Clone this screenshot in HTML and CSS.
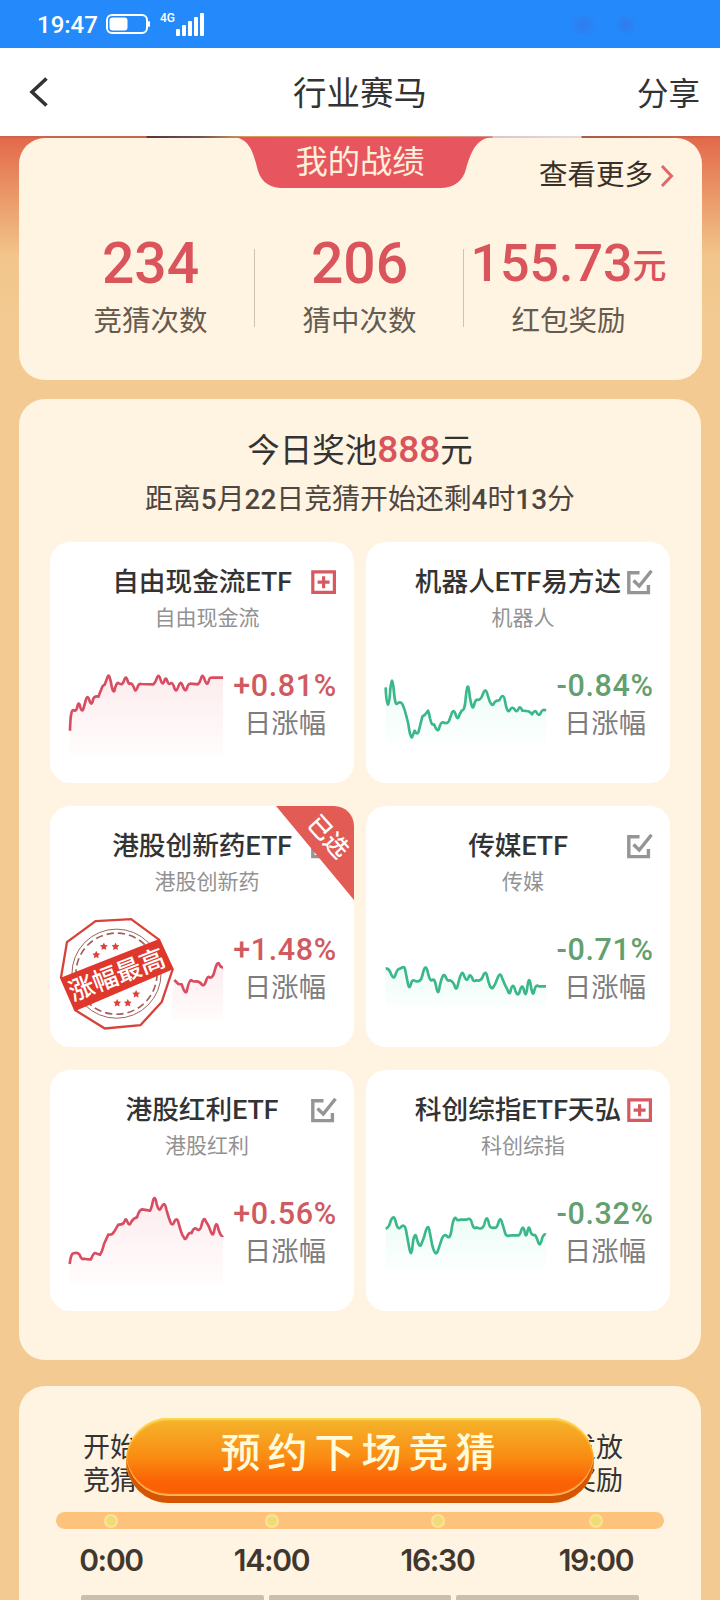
FILE: index.html
```html
<!DOCTYPE html>
<html lang="zh-CN">
<head>
    <meta charset="UTF-8">
    <meta name="viewport" content="width=device-width, initial-scale=1.0">
    <title>行业赛马</title>
    <link rel="stylesheet" href="styles.css">
</head>
<body>
    <svg class="defs" width="0" height="0">
        <defs>
            <linearGradient id="fillUp" x1="0" y1="0" x2="0" y2="1">
                <stop offset="0" stop-color="#fdecee"/>
                <stop offset="1" stop-color="#fffcfc"/>
            </linearGradient>
            <linearGradient id="fillDown" x1="0" y1="0" x2="0" y2="1">
                <stop offset="0" stop-color="#ecfcf6"/>
                <stop offset="1" stop-color="#fcfffe"/>
            </linearGradient>
            <symbol id="plus" viewBox="0 0 26 26">
                <path d="M1.8 1.8h21.6v20.6H1.8zM12.6 6.2v12M6.6 12.2h12" fill="none" stroke="#d65a60" stroke-width="3.2"/>
            </symbol>
            <symbol id="check" viewBox="0 0 26 26">
                <path d="M12.5 2.8H1.8v19.8h19.6v-7.5" fill="none" stroke="#959595" stroke-width="3.4"/>
                <path d="M6.5 10.500l5.800 5.600L24.500.8" fill="none" stroke="#959595" stroke-width="3.4"/>
            </symbol>
            <symbol id="star" viewBox="0 0 20 20">
                <path d="M10 0l3 6.5 7 .8-5.200 4.800 1.400 7L10 15.600l-6.200 3.500 1.400-7L0 7.300l7-.8z" fill="#dc4238"/>
            </symbol>
        </defs>
    </svg>

    <div class="status-bar">
        <span class="time">19:47</span>
        <svg class="battery" width="44" height="20" viewBox="0 0 44 20">
            <rect x="1" y="1" width="40" height="18" rx="5" fill="none" stroke="#fff" stroke-width="2"/>
            <rect x="3.500" y="3.500" width="18" height="13" rx="3" fill="#fff"/>
            <rect x="42" y="7" width="2" height="6" rx="1" fill="#fff"/>
        </svg>
        <span class="net">4G</span>
        <svg class="signal" width="28" height="24" viewBox="0 0 28 24" fill="#fff">
            <rect x="0" y="16" width="4" height="7" rx="1"/>
            <rect x="6" y="12" width="4" height="11" rx="1"/>
            <rect x="12" y="8" width="4" height="15" rx="1"/>
            <rect x="18" y="4" width="4" height="19" rx="1"/>
            <rect x="24" y="0" width="4" height="23" rx="1"/>
        </svg>
        <span class="smudge"></span>
    </div>

    <div class="nav-bar">
        <svg class="back" width="20" height="32" viewBox="0 0 20 32">
            <path d="M17.500 2.500L3 16l14.500 13.500" fill="none" stroke="#333" stroke-width="3.600"/>
        </svg>
        <h1>行业赛马</h1>
        <span class="share">分享</span>
    </div>

    <div class="page">
        <div class="banner-edge"></div>

        <div class="card record">
            <div class="record-tab">
                <svg width="260" height="51" viewBox="233 137 260 51">
                    <path d="M233 137C251 138 254 156 258 171C262 183 271 188 282 188H440C454 188 463 181 466 169C471 152 476 138 493 137Z" fill="#e7565f"/>
                </svg>
                <span>我的战绩</span>
            </div>
            <div class="more">查看更多
                <svg width="14" height="24" viewBox="0 0 14 24"><path d="M2 2l9.500 10L2 22" fill="none" stroke="#e2666c" stroke-width="3"/></svg>
            </div>
            <div class="stats">
                <div class="stat"><div class="num">234</div><div class="label">竞猜次数</div></div>
                <div class="stat"><div class="num">206</div><div class="label">猜中次数</div></div>
                <div class="stat"><div class="num money">155.73<small>元</small></div><div class="label">红包奖励</div></div>
            </div>
        </div>

        <div class="card pool">
            <h2>今日奖池<b>888</b>元</h2>
            <p class="countdown">距离<b>5</b>月<b>22</b>日竞猜开始还剩<b>4</b>时<b>13</b>分</p>

            <div class="etf-grid">
                <div class="etf up">
                    <svg class="pick"><use href="#plus"/></svg>
                    <h3>自由现金流ETF</h3>
                    <p class="sub">自由现金流</p>
                    <div class="quote">
                        <svg class="chart" viewBox="81 400 495 285">
                            <path class="area" d="M90 600L93 552L98 537L107 540L117 518L127 541L143 497L155 520L164 499L175 497L188 466L194 462L207 433L220 481L233 457L244 462L258 439L268 461L274 457L287 481L299 460L340 461L356 434L369 461L378 442L388 460L397 458L408 481L422 456L436 480L447 459L474 461L488 434L502 461L512 440L549 441V675H90Z"/>
                            <path class="line" d="M90 600Q91 560 94 548Q97 534 104 540Q110 542 113 524Q117 511 121 530Q127 550 132 528L138 506Q143 491 149 511Q155 528 159 507Q163 495 175 498L188 466L194 462L203 438Q207 427 212 451Q218 488 223 481Q229 455 235 457Q248 466 252 450Q258 431 263 451Q267 463 273 458Q279 461 283 474Q287 486 292 471Q296 457 304 460L340 461Q346 457 350 444Q356 426 362 448Q368 469 374 448Q378 437 383 454Q387 464 393 457Q399 457 403 472Q408 487 414 470Q421 448 427 463Q435 487 440 474Q445 457 453 459L474 461Q479 457 483 444Q488 426 494 447Q501 469 506 451Q509 439 516 441L549 441"/>
                        </svg>
                        <div class="change"><b>+0.81%</b><span>日涨幅</span></div>
                    </div>
                </div>

                <div class="etf down">
                    <svg class="pick"><use href="#check"/></svg>
                    <h3>机器人ETF易方达</h3>
                    <p class="sub">机器人</p>
                    <div class="quote">
                        <svg class="chart" viewBox="69 400 495 285">
                            <path class="area" d="M77 470L84 522L96 448L107 522L123 517L145 586L155 621L164 600L173 610L187 558L204 540L217 582L232 599L245 574L260 577L280 540L293 563L305 540L313 533L323 472L338 531L351 508L361 506L377 479L395 523L412 508L430 495L446 541L460 530L470 542L480 530L500 542L516 551L526 543L537 552L549 539L558 540V640H77Z"/>
                            <path class="line" d="M77 470Q79 522 84 522Q88 518 91 475Q96 424 101 475Q105 521 110 520Q120 510 127 520Q134 535 139 556L145 580Q151 623 156 620L164 600Q172 615 176 602L187 558L196 551L204 540Q207 546 210 563Q215 586 222 581Q232 607 237 594Q242 574 249 575Q262 581 267 571L274 551Q280 532 286 549Q293 573 298 553L305 540Q313 541 316 514Q323 431 329 496Q337 544 342 524Q347 503 353 508Q363 509 369 489Q377 468 383 493Q393 529 400 521Q406 508 418 509Q430 482 435 511Q442 551 449 539Q457 526 463 535Q471 549 476 533Q481 525 487 540L500 541Q509 541 516 551Q524 537 529 544Q537 561 543 545Q549 534 558 540"/>
                        </svg>
                        <div class="change"><b>-0.84%</b><span>日涨幅</span></div>
                    </div>
                </div>

                <div class="etf up">
                    <svg class="pick"><use href="#check"/></svg>
                    <h3>港股创新药ETF</h3>
                    <p class="sub">港股创新药</p>
                    <div class="quote">
                        <svg class="chart" viewBox="81 400 495 285">
                            <path class="area" d="M403 556L415 568L425 569L437 595L453 555L470 560L490 571L504 546L515 548L532 505L549 518V675H390Z"/>
                            <path class="line" d="M403 556L415 568L425 569Q435 600 440 591Q446 558 454 556Q458 562 467 560Q479 559 486 570Q493 576 498 559Q503 541 510 549Q519 550 524 528Q531 500 537 507Q541 519 549 518"/>
                        </svg>
                        <div class="change"><b>+1.48%</b><span>日涨幅</span></div>
                    </div>
                    <svg class="stamp" viewBox="55 365 355 345">
                        <path d="M168 377L275 371L358 432L400 522L367 620L303 690L196 700L107 645L64 547L82 440Z" fill="#fff" stroke="#d7433a" stroke-width="7"/>
                        <circle cx="231" cy="535" r="134" fill="none" stroke="#9e625b" stroke-width="3"/>
                        <circle cx="231" cy="535" r="122" fill="none" stroke="#a06059" stroke-width="5" stroke-dasharray="22 12"/>
                        <use href="#star" x="158" y="466" width="24" height="24"/>
                        <use href="#star" x="181" y="441" width="24" height="24"/>
                        <use href="#star" x="216" y="441" width="24" height="24"/>
                        <use href="#star" x="221" y="611" width="24" height="24"/>
                        <use href="#star" x="253" y="611" width="24" height="24"/>
                        <use href="#star" x="278" y="584" width="24" height="24"/>
                        <path d="M63 547L361 430L401 522L107 647Z" fill="#df372b"/>
                        <text x="232" y="565" transform="rotate(-21 232 538)" text-anchor="middle">涨幅最高</text>
                    </svg>
                    <div class="picked"><span>已选</span></div>
                </div>

                <div class="etf down">
                    <svg class="pick"><use href="#check"/></svg>
                    <h3>传媒ETF</h3>
                    <p class="sub">传媒</p>
                    <div class="quote">
                        <svg class="chart" viewBox="69 400 495 285">
                            <path class="area" d="M77 521L100 546L133 517L147 578L158 557L180 560L196 522L214 558L234 594L251 541L290 582L307 536L334 542L360 557L377 536L397 581L420 540L449 595L459 575L474 598L487 577L497 594L508 558L519 595L530 575H558V640H77Z"/>
                            <path class="line" d="M77 522Q86 520 91 533Q101 559 106 541Q113 520 119 523Q133 512 135 523L144 568Q148 588 154 564Q157 553 166 559Q182 565 187 543Q196 501 203 531Q209 560 216 557Q223 548 228 573Q234 611 239 575Q249 529 256 545Q262 561 269 557Q281 561 285 577Q290 590 295 565Q306 519 312 543Q319 563 325 550Q331 533 338 554Q342 562 348 557Q361 561 367 549Q377 521 382 547Q390 585 398 580Q405 572 411 554Q420 529 426 549Q434 570 442 584Q449 608 453 583Q460 562 466 588Q475 611 480 587Q487 565 492 587Q497 611 501 584Q507 537 512 571Q519 613 523 587Q528 567 536 575H558"/>
                        </svg>
                        <div class="change"><b>-0.71%</b><span>日涨幅</span></div>
                    </div>
                </div>

                <div class="etf up">
                    <svg class="pick"><use href="#check"/></svg>
                    <h3>港股红利ETF</h3>
                    <p class="sub">港股红利</p>
                    <div class="quote">
                        <svg class="chart" viewBox="81 394 495 285">
                            <path class="area" d="M89 610L98 578L115 577L127 595L152 596L166 577L180 581L205 522L220 519L235 492L257 477L268 492L290 470L304 446L330 449L344 414L358 449L374 432L397 492L411 477L435 535L453 516L482 507L494 474L520 523L530 490L549 524V670H89Z"/>
                            <path class="line" d="M89 610Q93 577 101 578Q112 574 118 581Q125 599 133 594Q144 597 153 596Q159 579 165 577L180 582Q187 572 192 550L205 522Q218 524 223 512L235 492Q250 493 254 481Q258 470 263 485Q268 499 274 483Q282 471 291 470Q297 449 306 446Q323 448 330 450Q334 445 338 425Q344 397 350 430Q357 457 364 440Q374 419 379 446Q385 468 391 484Q397 499 403 483Q411 467 416 488Q425 523 431 529Q436 542 442 526Q447 514 455 517Q461 499 469 504Q480 514 484 496Q492 462 498 483Q505 492 511 509Q519 534 523 508Q529 475 535 505Q543 531 549 524"/>
                        </svg>
                        <div class="change"><b>+0.56%</b><span>日涨幅</span></div>
                    </div>
                </div>

                <div class="etf down">
                    <svg class="pick"><use href="#plus"/></svg>
                    <h3>科创综指ETF天弘</h3>
                    <p class="sub">科创综指</p>
                    <div class="quote">
                        <svg class="chart" viewBox="69 394 495 285">
                            <path class="area" d="M77 504L102 470L118 503L136 500L153 578L166 523L180 554L205 502L228 579L255 523L270 529L284 473L332 476L343 503L368 502L382 475L395 502L421 475L440 525L477 524L490 500L520 519L540 550L558 522V625H77Z"/>
                            <path class="line" d="M77 504Q87 501 91 484Q101 457 107 483Q113 509 121 501Q134 486 138 509L148 563Q153 592 157 562Q161 517 168 525Q177 563 183 553L192 530Q204 479 209 513L217 555Q227 592 234 569L246 533Q253 519 260 525Q269 539 274 512Q280 468 287 472Q291 481 301 477H320Q332 468 336 488Q341 508 350 500Q367 510 373 491Q381 455 387 490Q390 504 402 501Q410 505 415 487Q421 464 427 489L436 519Q440 529 454 524H476Q481 521 484 508Q490 491 495 517Q498 534 503 510Q507 490 512 514Q515 525 525 523Q529 527 534 543Q540 561 545 538Q550 518 558 522"/>
                        </svg>
                        <div class="change"><b>-0.32%</b><span>日涨幅</span></div>
                    </div>
                </div>
            </div>
        </div>

        <div class="card schedule">
            <div class="steps">
                <span>开始<br>竞猜</span>
                <span></span>
                <span></span>
                <span>发放<br>奖励</span>
            </div>
            <div class="track"><i></i><i></i><i></i><i></i></div>
            <div class="hours"><span>0:00</span><span>14:00</span><span>16:30</span><span>19:00</span></div>
            <div class="segments"><i></i><i></i><i></i></div>
        </div>
    </div>

    <button class="book">预约下场竞猜</button>
</body>
</html>
```
FILE: styles.css
```css
* {
    box-sizing: border-box;
}
body {
    position: relative;
    margin: 0;
    width: 720px;
    height: 1600px;
    overflow: hidden;
    font-family: Roboto, "Noto Sans CJK SC", sans-serif;
    color: #333;
    background: #f2ca92;
}
h1, h2, h3, p {
    margin: 0;
    font-weight: 400;
}
.defs {
    position: absolute;
}

/* status bar */
.status-bar {
    display: flex;
    align-items: center;
    height: 48px;
    padding-left: 37px;
    background: #2489fb;
    color: #fff;
}
.time {
    width: 69px;
    padding-top: 2px;
    font-size: 24px;
    font-weight: 500;
    line-height: 46px;
}
.net {
    margin: 0 1px 13px 10px;
    font-size: 12px;
    font-weight: 500;
}
.signal {
    margin-top: 2px;
}
.smudge {
    width: 94px;
    height: 20px;
    margin: 2px 0 0 341px;
    background: radial-gradient(circle at 40% 50%, rgba(70, 100, 210, .35), transparent 14px), radial-gradient(circle at 86% 50%, rgba(70, 100, 210, .4), transparent 11px);
}

.nav-bar {
    display: flex;
    align-items: center;
    justify-content: space-between;
    height: 88px;
    padding: 0 20px 0 29px;
    background: #fff;
}
.nav-bar h1 {
    padding-top: 3px;
    margin-left: 34px;
    font-size: 33.5px;
    line-height: 85px;
}
.share {
    margin-bottom: 3px;
    font-size: 31.5px;
}

.page {
    height: 1464px;
    background: linear-gradient(#e3674a, #eb9a6a 62px, #f2c58b 120px, #f2ca92 180px);
}
.banner-edge {
    height: 2px;
    background: linear-gradient(90deg, #cc6550 146px, #5b3436 147px, #6d5350 200px, #d89a58 245px, #e0a04f 400px, #d8928a 492px, #d8c6d0 493px, #e5dada 581px, #a75c48 582px, #cf6a4e);
}
.card {
    width: 683px;
    margin-left: 19px;
    border-radius: 26px;
    background: #fff3e1;
}

/* my record */
.record {
    position: relative;
    height: 242px;
    padding-top: 96px;
}
.record-tab {
    position: absolute;
    top: -1px;
    left: 214px;
    width: 260px;
    text-align: center;
}
.record-tab svg {
    display: block;
}
.record-tab span {
    position: absolute;
    inset: 1px 6px 0 0;
    font-size: 32.3px;
    line-height: 48px;
    color: #fff0dc;
}
.more {
    position: absolute;
    top: 18px;
    right: 28px;
    display: flex;
    align-items: center;
    gap: 7px;
    font-size: 28.5px;
    line-height: 40px;
    color: #383027;
}
.stats {
    display: flex;
    padding: 0 28px 0 27px;
}
.stat {
    width: 209px;
    text-align: center;
    position: relative;
}
.stat + .stat::before {
    content: "";
    position: absolute;
    left: -1px;
    top: 15px;
    width: 1px;
    height: 78px;
    background: #cfc1af;
}
.num {
    height: 60px;
    font-size: 57px;
    font-weight: 500;
    line-height: 60px;
    color: #d9545b;
}
.money {
    font-size: 52px;
    white-space: nowrap;
}
.money small {
    position: relative;
    top: -3px;
    font-size: 34px;
}
.label {
    margin-top: 8px;
    font-size: 28.5px;
    line-height: 40px;
    color: #655b50;
}

/* prize pool */
.pool {
    width: 682px;
    height: 961px;
    margin-top: 19px;
    padding: 28px 31px 0;
}
.pool h2 {
    font-size: 32.5px;
    line-height: 46px;
    text-align: center;
}
.pool h2 b {
    font-size: 37px;
    font-weight: 500;
    color: #d9545b;
}
.countdown {
    margin-top: 6px;
    font-size: 27.9px;
    line-height: 40px;
    text-align: center;
    color: #4d463f;
}
.countdown b {
    font-weight: 500;
}
.etf-grid {
    display: grid;
    grid-template-columns: 304px 304px;
    grid-auto-rows: 241px;
    gap: 23px 12px;
    margin-top: 22px;
}
.etf {
    position: relative;
    overflow: hidden;
    padding-top: 23px;
    border-radius: 20px;
    background: #fff;
}
.etf h3 {
    font-size: 26.7px;
    font-weight: 500;
    line-height: 34px;
    text-align: center;
    white-space: nowrap;
}
.sub {
    margin-top: 5px;
    padding-left: 10px;
    font-size: 21px;
    line-height: 28px;
    text-align: center;
    color: #929292;
}
.pick {
    position: absolute;
    top: 28px;
    right: 17px;
    width: 26px;
    height: 26px;
}
.quote {
    display: flex;
    margin-top: 32px;
    padding-left: 17px;
}
.chart {
    flex: none;
    width: 165px;
    height: 95px;
}
.line {
    fill: none;
    stroke-width: 8;
    stroke-linejoin: round;
}
.up .line {
    stroke: #d94d63;
}
.down .line {
    stroke: #3bb88a;
}
.up .area {
    fill: url(#fillUp);
}
.down .area {
    fill: url(#fillDown);
}
.change {
    display: flex;
    flex-direction: column;
    align-items: center;
    width: 108px;
    margin-left: -1px;
}
.down .change {
    margin-left: 3px;
}
.change b {
    margin-top: 4px;
    font-size: 30.5px;
    font-weight: 500;
    letter-spacing: 0.6px;
    line-height: 36px;
    color: #d05a5f;
}
.down .change b {
    color: #649f6f;
}
.change span {
    font-size: 27.3px;
    line-height: 41px;
    color: #7d7d7d;
}

.stamp {
    position: absolute;
    left: 8px;
    top: 111px;
    width: 118px;
    height: 115px;
}
.stamp text {
    font-size: 76px;
    font-weight: 500;
    fill: #fff;
}
.picked {
    position: absolute;
    top: 0;
    right: 0;
    width: 78px;
    height: 94px;
    background: #e25b55;
    clip-path: polygon(0 0, 100% 0, 100% 100%);
}
.picked span {
    position: absolute;
    left: 28px;
    top: 15px;
    font-size: 24px;
    font-weight: 500;
    line-height: 32px;
    color: #fff;
    transform: rotate(48deg);
}

/* schedule */
.schedule {
    width: 682px;
    height: 240px;
    margin-top: 26px;
    padding: 46px 37px 0;
}
.steps, .track, .hours {
    display: grid;
    grid-template-columns: 110px 211px 121px 165px;
    justify-items: center;
}
.steps {
    height: 80px;
    font-size: 27px;
    line-height: 33px;
}
.steps span:first-child {
    margin-left: -2px;
}
.track {
    height: 17px;
    align-items: center;
    border-radius: 9px;
    background: #fdc37d;
}
.track i {
    width: 14px;
    height: 14px;
    border: 2px solid #ffe198;
    border-radius: 50%;
    background: #efdc75;
}
.steps span:last-child, .track i:last-child, .hours span:last-child {
    margin-left: 31px;
}
.hours {
    margin-top: 13px;
    font-family: Inter, sans-serif;
    font-size: 30px;
    font-weight: 600;
    letter-spacing: -1.3px;
    line-height: 36px;
    color: #40372e;
}
.segments {
    display: flex;
    gap: 5px;
    margin: 17px 25px 0;
}
.segments i {
    flex: 1;
    height: 10px;
    border-radius: 2px;
    background: #cbbeab;
}

.book {
    position: absolute;
    left: 126px;
    top: 1418px;
    width: 468px;
    height: 85px;
    padding: 0 0 22px 3px;
    border: 0;
    border-radius: 43px;
    font-family: inherit;
    font-size: 40px;
    font-weight: 500;
    letter-spacing: 7px;
    color: #fffad9;
    background: linear-gradient(#f4b52c, #fa8d13 45%, #fb6204 75%, #fa6004);
    box-shadow: inset 0 2px 2px #ffdc50, inset 0 -7px 0 #d45604, inset 0 -9px 1px #ffb658;
}
```
